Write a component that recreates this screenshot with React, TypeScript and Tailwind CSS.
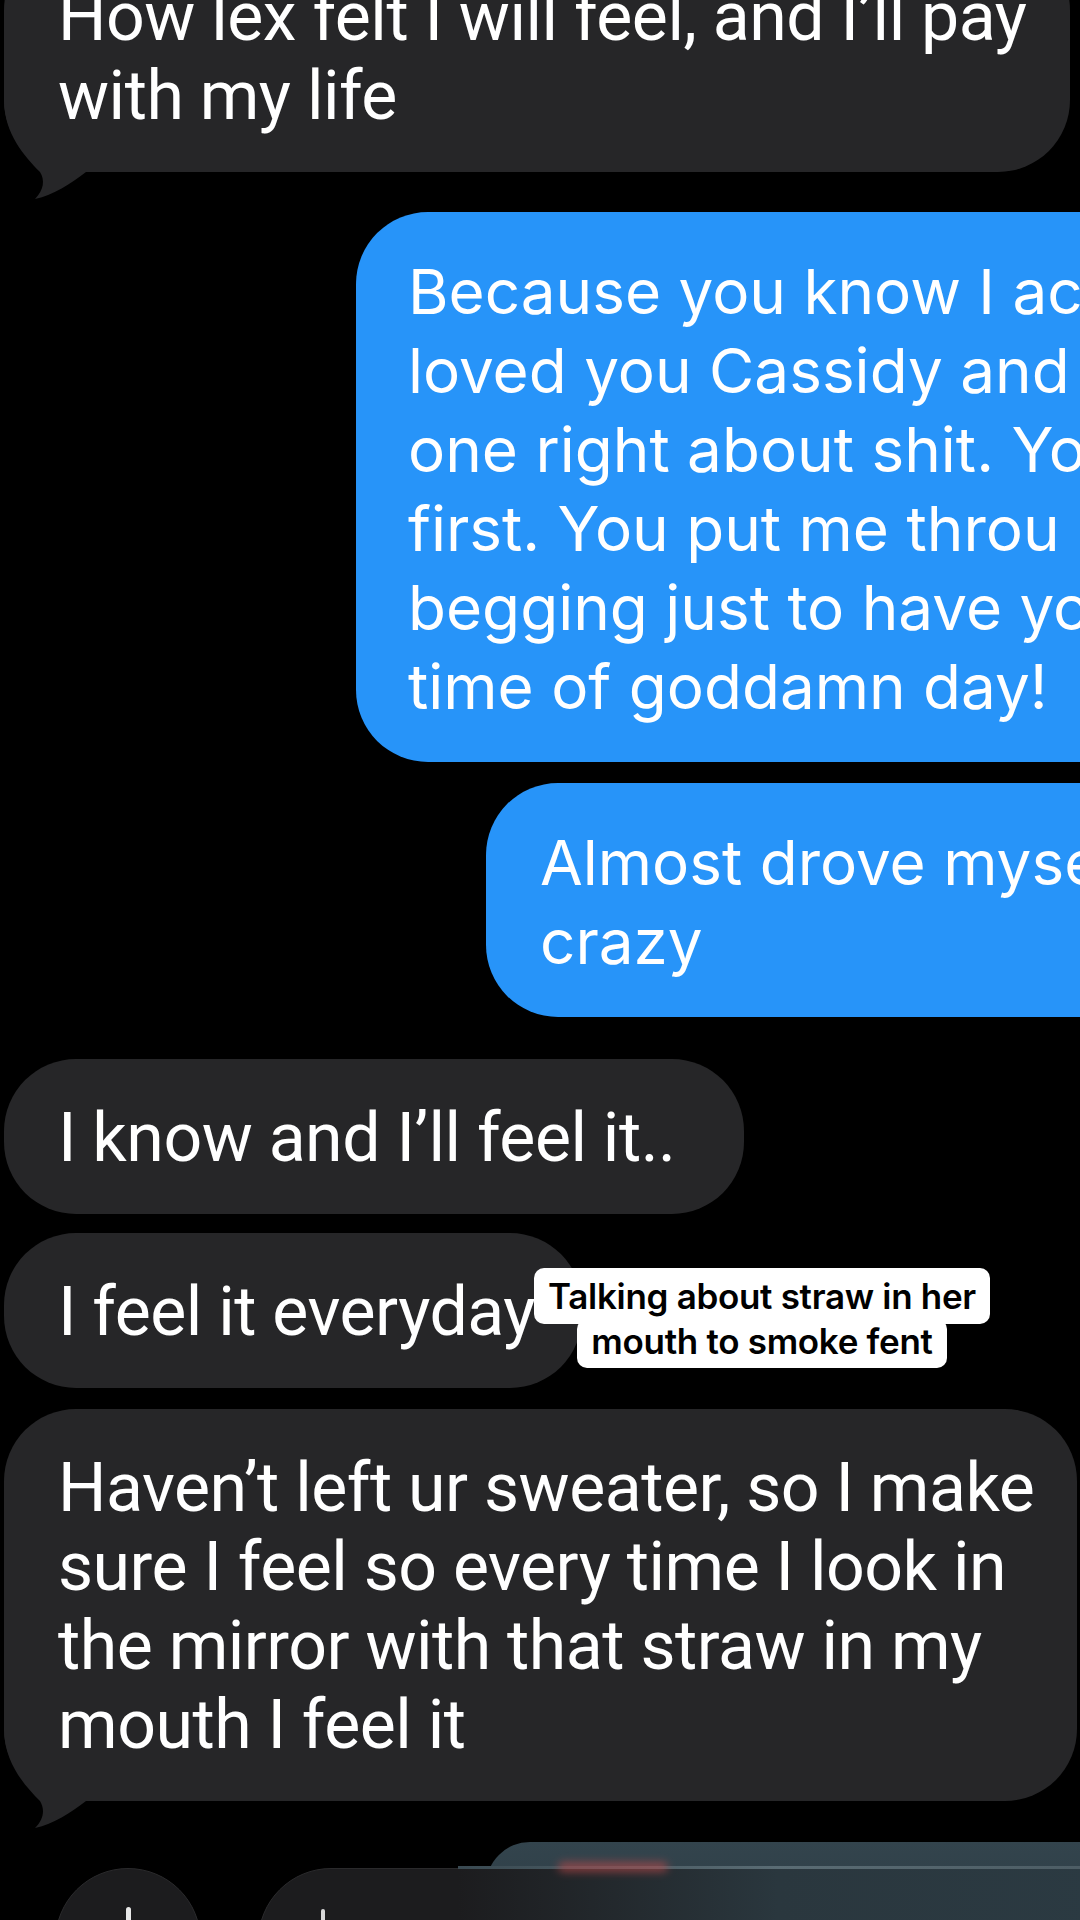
import React from "react";

const GRAY = "#262628";

function Tail({ color }: { color: string }) {
  return (
    <svg
      className="absolute left-0 bottom-[-30px]"
      width="90"
      height="130"
      viewBox="0 -100 90 130"
    >
      <path
        d="M0,-100 L0,-70 C1,-38 20,-16 36,0 C41,8 40,18 31,27 C50,23 66,12 82,0 L82,-100 Z"
        fill={color}
      />
    </svg>
  );
}

function GrayBubble({
  lines,
  width,
  tail,
  className = "",
}: {
  lines: string[];
  width: string;
  tail?: boolean;
  className?: string;
}) {
  return (
    <div
      className={`relative ml-[4px] ${width} bg-[#262628] rounded-[72px] pl-[54px] pt-[40px] pb-[36px] shrink-0 ${className}`}
    >
      {tail && <Tail color={GRAY} />}
      {lines.map((l, i) => (
        <div
          key={i}
          className="relative whitespace-nowrap text-white text-[68px] leading-[79px] tracking-[-0.5px] font-['Roboto',sans-serif]"
        >
          {l}
        </div>
      ))}
    </div>
  );
}

function BlueBubble({
  lines,
  className = "",
}: {
  lines: string[];
  className?: string;
}) {
  return (
    <div
      className={`relative bg-[#2794f9] rounded-[72px] rounded-r-none pt-[40px] pb-[36px] shrink-0 ${className}`}
    >
      {lines.map((l, i) => (
        <div
          key={i}
          className="whitespace-nowrap text-white text-[62px] leading-[79px] font-['Inter',sans-serif]"
        >
          {l}
        </div>
      ))}
    </div>
  );
}

export default function App() {
  return (
    <div className="relative w-[1080px] h-[1920px] overflow-hidden bg-black flex flex-col">
      <GrayBubble
        className="-mt-[62px]"
        width="w-[1066px]"
        tail
        lines={["How lex felt I will feel, and I’ll pay", "with my life"]}
      />

      <BlueBubble
        className="mt-[40px] ml-[356px] w-[760px] pl-[52px]"
        lines={[
          "Because you know I ac",
          "loved you Cassidy and",
          "one right about shit. Yo",
          "first. You put me throu",
          "begging just to have yo",
          "time of goddamn day!",
        ]}
      />

      <BlueBubble
        className="mt-[21px] ml-[486px] w-[620px] pl-[54px] pt-[38px]"
        lines={["Almost drove myse", "crazy"]}
      />

      <GrayBubble
        className="mt-[42px]"
        width="w-[740px]"
        lines={["I know and I’ll feel it.."]}
      />

      <GrayBubble
        className="mt-[19px]"
        width="w-[578px]"
        lines={["I feel it everyday"]}
      />

      <GrayBubble
        className="mt-[21px]"
        width="w-[1073px]"
        tail
        lines={[
          "Haven’t left ur sweater, so I make",
          "sure I feel so every time I look in",
          "the mirror with that straw in my",
          "mouth I feel it",
        ]}
      />

      {/* bottom input bar */}
      <div className="mt-[67px] flex items-start pl-[55px] shrink-0">
        <div className="relative w-[146px] h-[146px] rounded-full bg-[#1c1c1e] border border-[#2a2a2c] shrink-0">
          <div className="absolute left-[70px] top-[38px] w-[5px] h-[70px] rounded-full bg-[#e8e8e8]" />
          <div className="absolute left-[38px] top-[70px] w-[70px] h-[5px] rounded-full bg-[#e8e8e8]" />
        </div>
        <div className="relative ml-[57px] w-[900px] h-[146px] rounded-[73px] bg-[#1c1c1e] border border-[#2a2a2c] shrink-0">
          <div className="absolute left-[62px] top-[40px] w-[4px] h-[40px] rounded-full bg-[#d8d8d8]" />
        </div>
      </div>

      {/* blurred overlay at bottom */}
      <div className="absolute left-[486px] top-[1842px] w-[620px] h-[120px] rounded-tl-[44px] bg-gradient-to-b from-[#33444d] to-[#2b3a42]" />
      <div className="absolute left-[458px] top-[1866px] w-[640px] h-[80px] bg-gradient-to-r from-[#1c1c1e] via-[#2a373e] to-[#2b3a42]">
        <div className="h-[3px] w-full bg-gradient-to-r from-[#3a4a52] via-[#5a6c74] to-[#4c5c64]" />
        <div className="absolute left-[100px] top-[-4px] w-[110px] h-[10px] rounded-full bg-[#c44a4a] opacity-60 blur-[4px]" />
      </div>

      {/* caption label */}
      <div className="absolute left-[462px] top-[1268px] w-[600px] flex flex-col items-center font-['Inter',sans-serif] font-semibold text-black tracking-[-0.3px]">
        <div className="bg-white rounded-[10px] px-[14px] h-[56px] leading-[56px] text-[35px] whitespace-nowrap">
          Talking about straw in her
        </div>
        <div className="bg-white rounded-[10px] px-[14px] -mt-[5px] h-[49px] leading-[44px] text-[35px] whitespace-nowrap">
          mouth to smoke fent
        </div>
      </div>
    </div>
  );
}
